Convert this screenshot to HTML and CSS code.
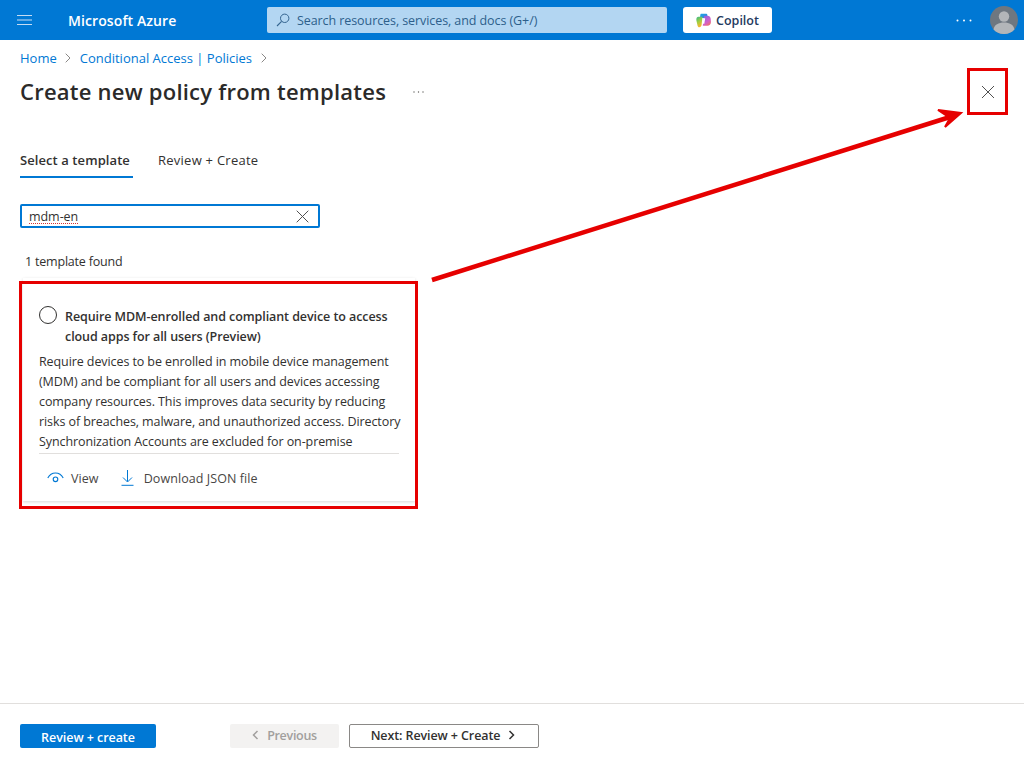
FILE: index.html
```html
<!DOCTYPE html>
<html lang="en">
<head>
<meta charset="utf-8">
<title>Create new policy from templates</title>
<link rel="stylesheet" href="styles.css">
</head>
<body>
<div class="page">
  <header class="topbar">
    <button class="burger" aria-label="Menu">
      <svg width="16" height="12" viewBox="0 0 16 12"><path d="M0 1.500h15M0 6h15M0 10.500h15" stroke="#c5dcf3" stroke-width="1.200" fill="none"/></svg>
    </button>
    <div class="brand">Microsoft Azure</div>
    <div class="search">
      <svg class="search-icon" width="14" height="14" viewBox="0 0 14 14"><circle cx="8.700" cy="5.300" r="4.200" fill="none" stroke="#33648f" stroke-width="1"/><path d="M5.600 8.400 1 13" stroke="#33648f" stroke-width="1.100" fill="none"/></svg>
      <span>Search resources, services, and docs (G+/)</span>
    </div>
    <button class="copilot">
      <svg width="15" height="15" viewBox="0 0 15 15">
        <defs>
          <linearGradient id="cg1" x1="0" y1="0" x2="1" y2="1"><stop offset="0" stop-color="#1fa5e6"/><stop offset="1" stop-color="#2f7fd8"/></linearGradient>
          <linearGradient id="cg2" x1="0" y1="0" x2="0.400" y2="1"><stop offset="0" stop-color="#35b88a"/><stop offset=".55" stop-color="#a5cf3f"/><stop offset="1" stop-color="#f9b42d"/></linearGradient>
          <linearGradient id="cg3" x1="0.200" y1="0" x2="0.800" y2="1"><stop offset="0" stop-color="#8b63e0"/><stop offset=".6" stop-color="#d35fc9"/><stop offset="1" stop-color="#f2705f"/></linearGradient>
        </defs>
        <path d="M5.500 .8h4.300c1 0 1.500.5 1.600 1.400L11.700 5H4l.3-2.800C4.400 1.300 4.700.8 5.500.8z" fill="url(#cg1)"/>
        <path d="M2.500 3.800h4L5.600 11.800c-.2 1.600-1 2.400-2.300 2.400-1 0-1.500-.6-1.700-1.500L.4 7.500C0 5.300 1 3.800 2.500 3.800z" fill="url(#cg2)"/>
        <path d="M8 2.800h3.500c1.700 0 3 1.200 3.200 3l.2 2.700c.2 2.700-1.200 4.300-3.500 4.300H6.800z" fill="url(#cg3)"/>
        <path d="M7.400 5.200h1.800L8.300 10.800H6.500z" fill="#fff"/>
      </svg>
      <span>Copilot</span>
    </button>
    <div class="spacer"></div>
    <svg class="more" width="16" height="3" viewBox="0 0 16 3"><circle cx="1.500" cy="1.500" r="1" fill="#fff"/><circle cx="8" cy="1.500" r="1" fill="#fff"/><circle cx="14.500" cy="1.500" r="1" fill="#fff"/></svg>
    <div class="avatar">
      <svg width="28" height="28" viewBox="0 0 28 28"><circle cx="14" cy="14" r="14" fill="#6e7780"/><circle cx="14" cy="10.500" r="5.200" fill="#b3b6b9"/><path d="M3.500 23.500c1-5 5-7 10.500-7s9.500 2 10.500 7A14 14 0 0 1 14 28a14 14 0 0 1-10.500-4.500z" fill="#b3b6b9"/></svg>
    </div>
  </header>

  <main class="content">
    <nav class="crumbs">
      <a>Home</a>
      <svg class="chev" width="6" height="10" viewBox="0 0 6 10"><path d="M.7.700 5 5 .7 9.300" fill="none" stroke="#8a8886" stroke-width="1"/></svg>
      <a>Conditional Access | Policies</a>
      <svg class="chev" width="6" height="10" viewBox="0 0 6 10"><path d="M.7.700 5 5 .7 9.300" fill="none" stroke="#8a8886" stroke-width="1"/></svg>
    </nav>
    <div class="titlerow">
      <h1>Create new policy from templates</h1>
      <svg class="title-more" width="11" height="2" viewBox="0 0 11 2"><circle cx="1" cy="1" r=".7" fill="#605e5c"/><circle cx="5.500" cy="1" r=".7" fill="#605e5c"/><circle cx="10" cy="1" r=".7" fill="#605e5c"/></svg>
      <button class="close" aria-label="Close">
        <svg width="14" height="14" viewBox="0 0 14 14"><path d="M1 1l12 12M13 1 1 13" stroke="#505050" stroke-width="1" fill="none"/></svg>
      </button>
    </div>
    <div class="tabs">
      <div class="tab active">Select a template</div>
      <div class="tab">Review + Create</div>
    </div>
    <div class="filter">
      <span class="filter-text">mdm-en</span>
      <svg width="13" height="13" viewBox="0 0 13 13"><path d="M.7.700l11.600 11.600M12.300.700.700 12.300" stroke="#505050" stroke-width="1" fill="none"/></svg>
    </div>
    <p class="count">1 template found</p>
    <article class="card">
      <div class="card-head">
        <span class="radio"></span>
        <h2>Require MDM-enrolled and compliant device to access cloud apps for all users (Preview)</h2>
      </div>
      <p class="desc">Require devices to be enrolled in mobile device management (MDM) and be compliant for all users and devices accessing company resources. This improves data security by reducing risks of breaches, malware, and unauthorized access. Directory Synchronization Accounts are excluded for on-premise</p>
      <div class="actions">
        <span class="action action-view">
          <svg width="17" height="12" viewBox="0 0 17 12"><path d="M.8 6C2.500 2.700 5.200 1 8.500 1s6 1.700 7.700 5" fill="none" stroke="#0078d4" stroke-width="1.100"/><circle cx="8.500" cy="7.300" r="2.300" fill="none" stroke="#0078d4" stroke-width="1.100"/></svg>
          View
        </span>
        <span class="action">
          <svg width="13" height="16" viewBox="0 0 13 16"><path d="M6.500 0v11.500M2 7.500l4.500 4.500L11 7.500M.5 15.300h12" fill="none" stroke="#0078d4" stroke-width="1"/></svg>
          Download JSON file
        </span>
      </div>
    </article>
  </main>

  <footer class="footer">
    <button class="btn-primary">Review + create</button>
    <div class="wizard">
      <button class="btn-disabled">
        <svg width="7" height="10" viewBox="0 0 7 10"><path d="M5.500 1 1.500 5l4 4" fill="none" stroke="#a19f9d" stroke-width="1.500"/></svg>
        Previous
      </button>
      <button class="btn-outline">
        Next: Review + Create
        <svg width="7" height="10" viewBox="0 0 7 10"><path d="M1.500 1l4 4-4 4" fill="none" stroke="#323130" stroke-width="1.500"/></svg>
      </button>
    </div>
  </footer>
</div>

<svg class="annotations" width="1024" height="768" viewBox="0 0 1024 768" aria-hidden="true">
  <rect x="968.500" y="69.500" width="38" height="44" fill="none" stroke="#e60000" stroke-width="3"/>
  <rect x="20.500" y="282.500" width="396" height="225" fill="none" stroke="#e60000" stroke-width="3"/>
  <path d="M432 280 950 117" stroke="#e60000" stroke-width="4.500" fill="none"/>
  <path d="M938 110 961 113 945 127 950 118z" fill="#e60000" stroke="#e60000" stroke-width="2"/>
</svg>
</body>
</html>
```

FILE: styles.css
```css
* { box-sizing: border-box; }
html, body { margin: 0; padding: 0; }
body {
  width: 1024px;
  height: 768px;
  overflow: hidden;
  position: relative;
  background: #fff;
  color: #323130;
  font-family: "Open Sans", "Noto Sans", sans-serif;
  font-size: 12.500px;
}
button { font-family: inherit; border: 0; background: none; padding: 0; }
.page { display: flex; flex-direction: column; height: 768px; }

.topbar {
  height: 40px;
  flex: none;
  background: #0078d4;
  display: flex;
  align-items: center;
  padding-left: 17px;
  padding-right: 6px;
}
.burger { width: 16px; height: 12px; display: flex; margin-right: 35px; }
.brand { color: #fff; font-size: 14px; font-weight: 600; width: 199px; letter-spacing: .1px; }
.search {
  width: 400px;
  height: 26px;
  background: #b3d6f2;
  border-radius: 2px;
  display: flex;
  align-items: center;
  padding-left: 9px;
  color: #2d5f8b;
  font-size: 12.500px;
  letter-spacing: -.08px;
}
.search-icon { margin-right: 7px; }
.copilot {
  width: 89px;
  height: 26px;
  margin-left: 16px;
  background: #fff;
  border-radius: 3px;
  display: flex;
  align-items: center;
  justify-content: center;
  gap: 5px;
  color: #243a5e;
  font-size: 12.500px;
  font-weight: 600;
}
.spacer { flex: 1; }
.more { margin-right: 18px; }
.avatar { width: 28px; height: 28px; }

.content { flex: 1; padding: 0 20px; min-height: 0; }
.crumbs { display: flex; align-items: center; height: 36px; padding-bottom: 1px; gap: 8.500px; font-size: 13px; }
.crumbs a { color: #0078d4; }
.titlerow { display: flex; align-items: center; height: 32px; }
h1 { margin: 0 0 2px; font-size: 22px; font-weight: 600; color: #2b2a29; letter-spacing: .23px; }
.title-more { margin-left: 27px; }
.close { margin-left: auto; margin-right: 9px; width: 14px; height: 14px; display: flex; }

.tabs { display: flex; gap: 25px; margin-top: 36px; }
.tab { height: 34px; padding-top: 7px; font-size: 13px; letter-spacing: .25px; }
.tab.active { font-weight: 600; border-bottom: 2px solid #0078d4; width: 113px; letter-spacing: .08px; }
.filter {
  width: 300px;
  height: 24px;
  margin-top: 26px;
  border: 2px solid #0078d4;
  border-radius: 2px;
  display: flex;
  align-items: center;
  justify-content: space-between;
  padding: 0 9px 0 7px;
}
.filter-text {
  font-size: 12.500px;
  letter-spacing: -.05px;
  text-decoration: underline dotted #d13438 1px;
  text-underline-offset: 2px;
}
.count { margin: 25px 0 0 5px; height: 18px; line-height: 18px; font-size: 12.500px; letter-spacing: -.2px; }

.card {
  width: 392px;
  height: 223px;
  margin: 7px 0 0 3px;
  padding: 29px 16px 0 16px;
  box-shadow: 0 1px 3px rgba(0,0,0,.16);
}
.card-head { display: flex; gap: 8px; }
.radio { flex: none; width: 18px; height: 18px; margin-top: -1px; border: 1px solid #323130; border-radius: 50%; }
h2 { margin: 0; font-size: 12.500px; line-height: 20px; font-weight: 600; letter-spacing: -.08px; }
.desc {
  margin: 5px -8px 0 0;
  height: 100px;
  overflow: hidden;
  font-size: 12.500px;
  line-height: 20px;
  letter-spacing: -.09px;
}
.actions {
  display: flex;
  align-items: center;
  height: 49px;
  border-top: 1px solid #e1dfdd;
  margin-top: 1px;
  padding-left: 8px;
  gap: 22px;
  color: #484644;
}
.action { display: flex; align-items: center; gap: 10px; letter-spacing: .08px; }
.action-view { gap: 7px; }
.action svg { flex: none; }

.footer {
  flex: none;
  height: 65px;
  border-top: 1px solid #e1dfdd;
  display: flex;
  padding: 20px 0 0 20px;
  align-items: flex-start;
}
.btn-primary {
  width: 136px;
  height: 24px;
  padding-top: 2px;
  background: #0078d4;
  color: #fff;
  border-radius: 2px;
  font-size: 12.500px;
  font-weight: 600;
  letter-spacing: -.05px;
}
.wizard { display: flex; gap: 10px; margin-left: 74px; }
.btn-disabled, .btn-outline {
  height: 24px;
  padding-bottom: 2px;
  display: flex;
  align-items: center;
  justify-content: center;
  border-radius: 2px;
  font-size: 12.500px;
  font-weight: 600;
}
.btn-disabled { width: 109px; gap: 8px; background: #f3f2f1; color: #a19f9d; letter-spacing: -.3px; }
.btn-outline { width: 190px; gap: 8px; padding-right: 2px; background: #fff; border: 1px solid #8a8886; color: #323130; letter-spacing: -.1px; }

.annotations { position: absolute; left: 0; top: 0; pointer-events: none; }
```
